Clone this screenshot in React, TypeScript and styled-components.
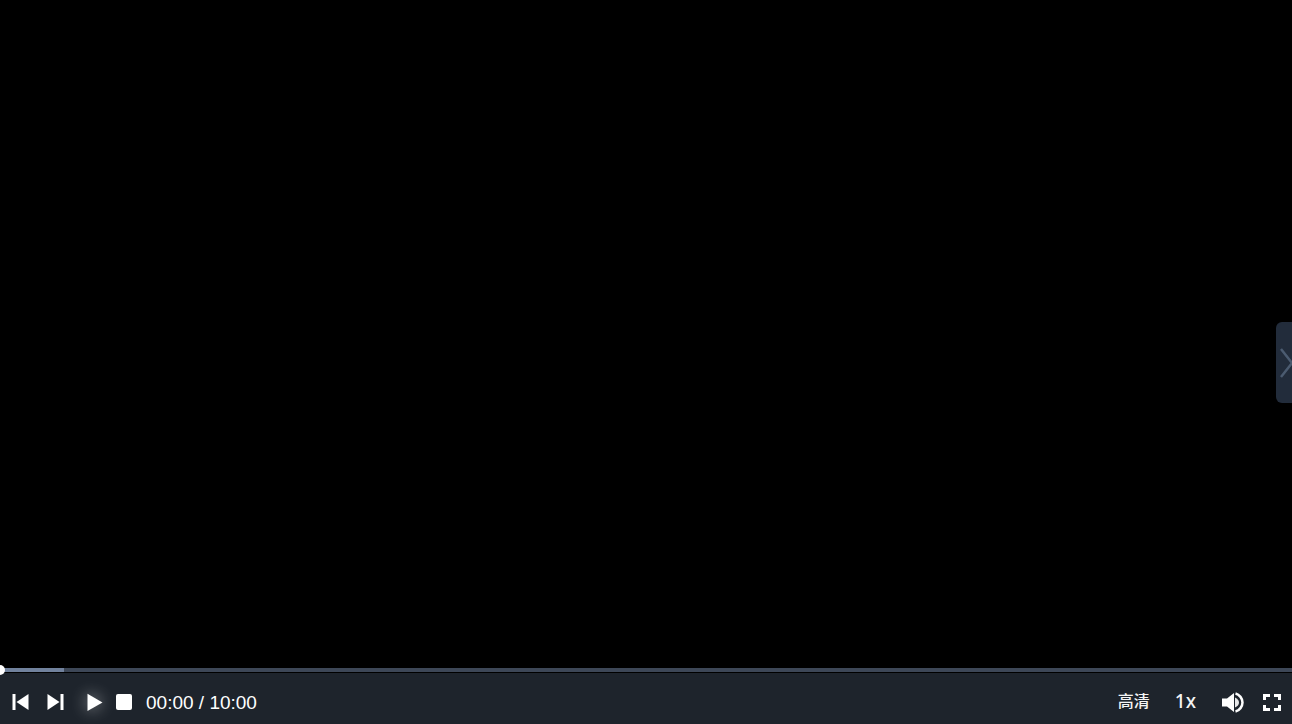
import React, { useState } from "react";
import styled, { createGlobalStyle } from "styled-components";

const GlobalStyle = createGlobalStyle`
  * { box-sizing: border-box; }
  body { margin: 0; background: #000; }
`;

const Player = styled.main`
  display: flex;
  flex-direction: column;
  height: 100vh;
  overflow: hidden;
  background: #000;
  color: #fff;
  font-family: "Liberation Sans", "Noto Sans CJK SC", sans-serif;
`;

const Stage = styled.section`
  flex: 1;
  min-height: 0;
  display: flex;
  align-items: center;
  justify-content: flex-end;
  padding-top: 59px;
`;

const DrawerHandle = styled.button`
  width: 16px;
  height: 81px;
  padding: 2px 0 0 4px;
  border: 0;
  border-radius: 6px 0 0 6px;
  background: #222c3b;
  color: #4b5b70;
  overflow: hidden;
  cursor: pointer;
  svg { display: block; }
`;

const Seek = styled.input<{ $buffered: number }>`
  appearance: none;
  display: block;
  width: calc(100% + 10px);
  height: 10px;
  margin: 0 -5px -2px;
  padding: 0;
  background: transparent;
  position: relative;
  z-index: 1;
  cursor: pointer;
  &::-webkit-slider-runnable-track {
    height: 4px;
    background: linear-gradient(
      to right,
      #71829d ${(p) => p.$buffered}%,
      #3d4757 ${(p) => p.$buffered}%
    );
  }
  &::-webkit-slider-thumb {
    appearance: none;
    width: 10px;
    height: 10px;
    margin-top: -3px;
    border-radius: 50%;
    background: #fff;
  }
`;

const Controls = styled.footer`
  display: flex;
  justify-content: space-between;
  height: 51px;
  padding: 0 8px;
  background: #1e242c;
`;

const Group = styled.div<{ $gap: number }>`
  display: flex;
  align-items: center;
  gap: ${(p) => p.$gap}px;
  padding-top: 7px;
`;

const IconButton = styled.button<{ $glow?: boolean }>`
  display: grid;
  place-items: center;
  width: 24px;
  height: 24px;
  padding: 0;
  border: 0;
  border-radius: 50%;
  background: transparent;
  color: #fff;
  cursor: pointer;
  svg {
    display: block;
    overflow: visible;
    filter: ${(p) => (p.$glow ? "drop-shadow(0 0 8px rgba(255, 255, 255, 0.6))" : "none")};
  }
`;

const Cluster = styled.div<{ $gap: number }>`
  display: flex;
  align-items: center;
  gap: ${(p) => p.$gap}px;
`;

const Time = styled.span`
  padding-top: 2px;
  font-size: 19px;
  line-height: 24px;
`;

const Option = styled.button<{ $size: number }>`
  padding: 0 0 2px;
  border: 0;
  background: transparent;
  color: #f4f4f4;
  font-family: "Noto Sans", "Noto Sans CJK SC", sans-serif;
  font-size: ${(p) => p.$size}px;
  font-weight: 500;
  line-height: 24px;
  height: 28px;
  cursor: pointer;
`;

export default function App() {
  const [position, setPosition] = useState(0);
  return (
    <Player>
      <GlobalStyle />
      <Stage aria-label="Video">
        <DrawerHandle aria-label="Toggle side panel">
          <svg width="16" height="30" viewBox="0 0 16 30" fill="none" stroke="currentColor" strokeWidth="2.500">
            <path d="M1 1 L12 15 L1 29" />
          </svg>
        </DrawerHandle>
      </Stage>
      <Seek
        type="range"
        aria-label="Seek"
        min={0}
        max={600}
        value={position}
        $buffered={5.3}
        onChange={(e) => setPosition(Number(e.target.value))}
      />
      <Controls>
        <Group $gap={10}>
          <Cluster $gap={15}>
            <Cluster $gap={11}>
              <IconButton aria-label="Previous">
                <svg width="24" height="24" fill="currentColor">
                  <path d="M4.500 4h3v16h-3zM20.500 4v16L8.500 12z" />
                </svg>
              </IconButton>
              <IconButton aria-label="Next">
                <svg width="24" height="24" fill="currentColor">
                  <path d="M4.500 4v16l12-8zM17.500 4h3v16h-3z" />
                </svg>
              </IconButton>
            </Cluster>
            <Cluster $gap={6}>
              <IconButton aria-label="Play" $glow>
                <svg width="24" height="24" fill="currentColor">
                  <path d="M5.500 3.700v17.300l15-8.600z" />
                </svg>
              </IconButton>
              <IconButton aria-label="Stop">
                <svg width="24" height="24" fill="currentColor">
                  <rect x="4" y="4" width="16" height="16" rx="2" />
                </svg>
              </IconButton>
            </Cluster>
          </Cluster>
          <Time>00:00 / 10:00</Time>
        </Group>
        <Group $gap={25}>
          <Option $size={16}>高清</Option>
          <Option $size={19}>1x</Option>
          <Cluster $gap={15}>
            <IconButton aria-label="Volume">
              <svg width="24" height="24" fill="currentColor">
                <path d="M1 8.500v8h5l7 5.500V3L6 8.500z" />
                <path d="M14 7.500c2.500 1 4 3 4 5s-1.500 4-4 5z" opacity="0.9" />
                <path d="M14.500 3.500c4 1 7 5 7 9s-3 8-7 9" fill="none" stroke="currentColor" strokeWidth="2.500" />
              </svg>
            </IconButton>
            <IconButton aria-label="Full screen">
              <svg width="24" height="24" fill="none" stroke="currentColor" strokeWidth="3">
                <path d="M4.500 10V5.500H10M14 5.500h5.500V10M19.500 15v4.500H14M10 19.500H4.500V15" />
              </svg>
            </IconButton>
          </Cluster>
        </Group>
      </Controls>
    </Player>
  );
}
